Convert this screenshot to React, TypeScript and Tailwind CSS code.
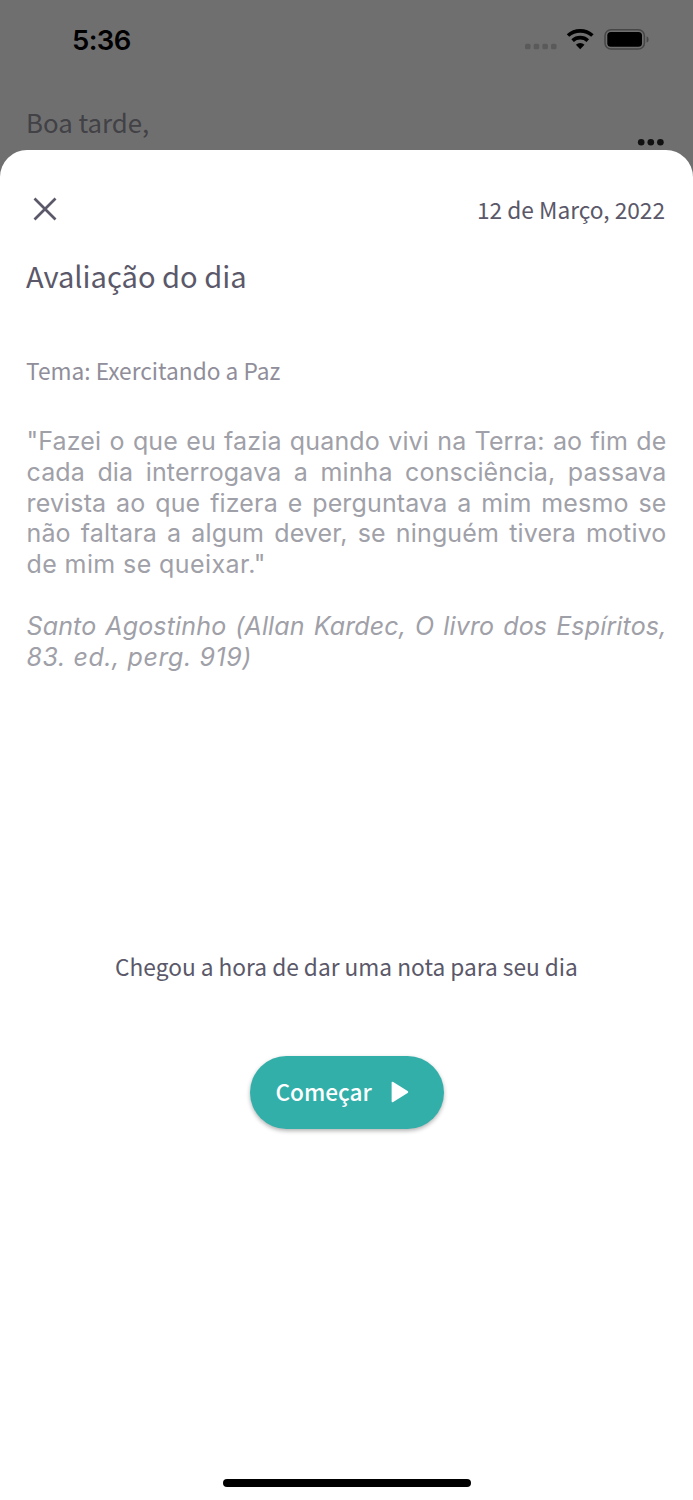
import { useState } from "react";

const quoteLines = [
  '"Fazei o que eu fazia quando vivi na Terra: ao fim de',
  "cada dia interrogava a minha consciência, passava",
  "revista ao que fizera e perguntava a mim mesmo se",
  "não faltara a algum dever, se ninguém tivera motivo",
];

const StatusBar = () => {
  return (
    <div className="flex h-20 shrink-0 items-center justify-between pl-[72px] pr-[44px] text-black">
      <span className="font-['Inter',sans-serif] text-[27.5px] font-semibold leading-7 tracking-[-0.6px]">
        5:36
      </span>
      <svg width="124" height="28" viewBox="0 0 124 28" fill="none">
        {/* No signal */}
        <g fill="#5a5a5a">
          <rect x="0" y="17.8" width="5.5" height="5.5" rx="1.5" />
          <rect x="8.7" y="17.8" width="5.5" height="5.5" rx="1.5" />
          <rect x="17.4" y="17.8" width="5.5" height="5.5" rx="1.5" />
          <rect x="26" y="17.8" width="5.5" height="5.5" rx="1.5" />
        </g>
        {/* Wifi */}
        <g stroke="#000" strokeWidth="3.7">
          <path d="M43 9.5 A18.2 18.2 0 0 1 67.4 9.5" />
          <path d="M47.6 14.6 A11.3 11.3 0 0 1 62.8 14.6" />
        </g>
        <path d="M55.2 23.2 L50.9 18.7 A6.2 6.2 0 0 1 59.5 18.7 Z" fill="#000" />
        {/* Battery */}
        <rect x="80" y="3.7" width="39.4" height="19.4" rx="6" stroke="#464646" strokeWidth="1.5" />
        <rect x="82.3" y="6" width="34.7" height="14.8" rx="3.6" fill="#000" />
        <path d="M121.6 10.2 C124.2 11.2 124.2 15.6 121.6 16.6 Z" fill="#464646" />
      </svg>
    </div>
  );
};

const MoreIcon = () => (
  <svg width="28" height="8" viewBox="0 0 28 8" fill="#111">
    <circle cx="4.2" cy="4.2" r="3.3" />
    <circle cx="13.8" cy="4.2" r="3.3" />
    <circle cx="23.4" cy="4.2" r="3.3" />
  </svg>
);

const CloseIcon = () => (
  <svg width="24" height="24" viewBox="0 0 24 24" fill="none" stroke="#5a5869" strokeWidth="2.7">
    <path d="M1.5 1.5 L22.5 22.5 M22.5 1.5 L1.5 22.5" />
  </svg>
);

const PlayIcon = () => (
  <svg width="18" height="22" viewBox="0 0 18 22" fill="#fff">
    <path d="M0.6 2 Q0.6 0.2 2.2 1.1 L16.6 10 Q18 11 16.6 12 L2.2 20.9 Q0.6 21.8 0.6 20 Z" />
  </svg>
);

export default function App() {
  const [open, setOpen] = useState(true);

  return (
    <div className="flex h-[1500px] w-[693px] flex-col overflow-hidden bg-[#6f6f6f] font-['Noto_Sans_CJK_JP','Noto_Sans',sans-serif]">
      <StatusBar />

      <header className="flex h-[70px] shrink-0 items-start justify-between pl-[26px] pr-[28px] pt-[22px]">
        <h1 className="text-[25.8px] leading-10 text-[#414146]">Boa tarde,</h1>
        <button className="mt-9" aria-label="Mais">
          <MoreIcon />
        </button>
      </header>

      {open && (
        <section className="flex flex-1 flex-col rounded-t-[27px] bg-white px-[26px] text-[#5a5869]">
          <div className="flex h-[118px] items-center justify-between">
            <button onClick={() => setOpen(false)} className="ml-[7px]" aria-label="Fechar">
              <CloseIcon />
            </button>
            <time className="mr-[2px] pt-px text-[22.7px] leading-9">12 de Março, 2022</time>
          </div>

          <h2 className="mt-[-15px] text-[29.1px] leading-[44px]">Avaliação do dia</h2>
          <h3 className="mt-[56px] text-[22.7px] leading-9 text-[#8f8e9a]">
            Tema: Exercitando a Paz
          </h3>

          <div className="ml-[0.5px] mt-[37px] w-[640px] whitespace-nowrap font-['Inter',sans-serif] text-[25px] leading-[30.8px] tracking-[0.15px] text-[#a0a0a8]">
            <p>
              {quoteLines.map((line) => (
                <span key={line} className="block text-justify [text-align-last:justify]">
                  {line}{" "}
                </span>
              ))}
              <span className="block tracking-[0.4px]">de mim se queixar."</span>
            </p>
            <p className="mt-[30.8px] italic">
              <span className="block text-justify [text-align-last:justify]">
                Santo Agostinho (Allan Kardec, O livro dos Espíritos,{" "}
              </span>
              <span className="block tracking-[0.6px]">83. ed., perg. 919)</span>
            </p>
          </div>

          <p className="mt-[277px] text-center text-[22.7px] leading-9">
            Chegou a hora de dar uma nota para seu dia
          </p>

          <button className="mt-[70.5px] flex h-[73px] w-[194px] items-center justify-between self-center rounded-full bg-[#33afaa] pl-[26px] pr-[35px] text-[22.6px] font-medium text-white shadow-[0_2px_4px_rgba(0,0,0,0.3)]">
            Começar
            <PlayIcon />
          </button>

          <div className="mb-[13px] mt-auto h-2 w-[248px] self-center rounded-full bg-black" />
        </section>
      )}
    </div>
  );
}
